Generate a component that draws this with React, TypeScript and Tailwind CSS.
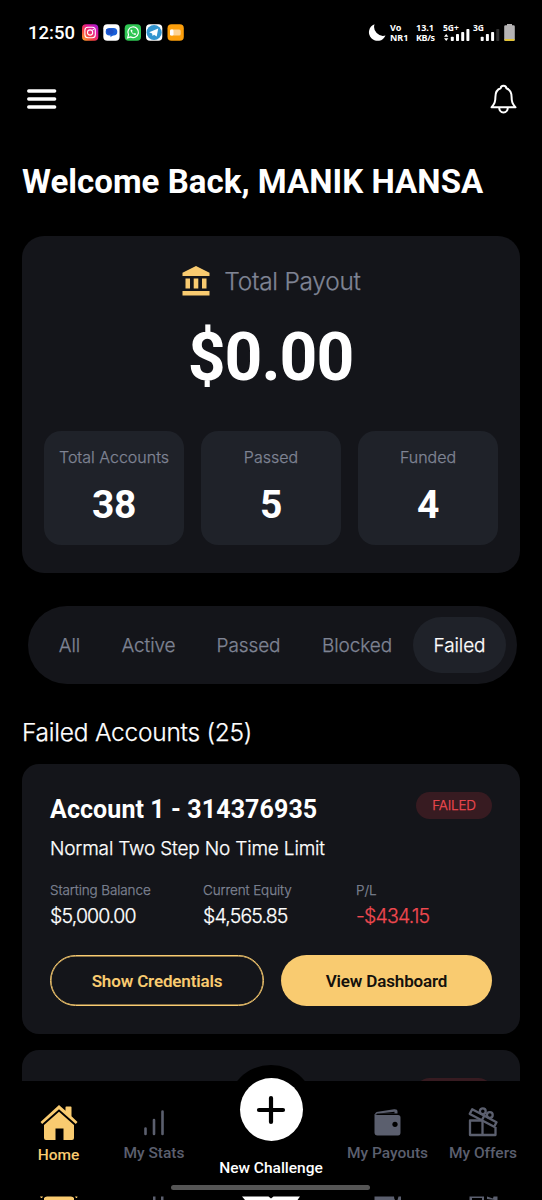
import type { ReactNode } from "react";

const sans = "font-[Inter,'Open_Sans',sans-serif] font-light [-webkit-text-stroke:0.25px_currentColor]";
const roboto = "font-[Roboto,sans-serif]";

function AppIcons() {
  return (
    <svg width="102" height="18" viewBox="82 24 102 18">
      <defs>
        <linearGradient id="ig" x1="0" y1="1" x2="1" y2="0">
          <stop offset="0" stopColor="#fdb32b" />
          <stop offset="0.35" stopColor="#f5413f" />
          <stop offset="0.65" stopColor="#e5189b" />
          <stop offset="1" stopColor="#9a1fd8" />
        </linearGradient>
      </defs>
      <rect x="82" y="24.3" width="16.3" height="16.5" rx="4" fill="url(#ig)" />
      <rect x="84.9" y="27.3" width="10.4" height="10.4" rx="3" fill="none" stroke="#fff" strokeWidth="1.1" />
      <circle cx="90.1" cy="32.5" r="2.6" fill="none" stroke="#fff" strokeWidth="1.1" />
      <circle cx="93.2" cy="29.5" r="0.7" fill="#fff" />
      <rect x="103.3" y="24.3" width="16.3" height="16.5" rx="4" fill="#fff" />
      <path d="M109.500 28h4a3.700 3.700 0 0 1 0 7.600l-1.500.3-1.500 1.300v-1.600h-1a3.800 3.800 0 0 1 0-7.600z" fill="#1a5fd8" />
      <path d="M106 29h6a2.700 2.700 0 0 1 0 5h-3a3.300 3.300 0 0 1-2-3.300z" fill="#1d4fc4" />
      <rect x="124.700" y="24.300" width="16.300" height="16.500" rx="4" fill="#2fc653" />
      <path d="M127.600 37.800l.9-3a5.300 5.300 0 1 1 2.100 2.100z" fill="none" stroke="#fff" strokeWidth="1.200" />
      <path d="M130.700 29.700c-.8 1.500 2.500 5.300 4.400 5.200.7 0 1.300-.7 1-1.200l-1.300-.7-.8.7c-1-.4-1.600-1-2-1.900l.6-.8-.6-1.300z" fill="#fff" />
      <rect x="146" y="24.300" width="16.300" height="16.500" rx="4" fill="#fff" />
      <circle cx="154.100" cy="32.500" r="7.600" fill="#3295cf" />
      <path d="M149.200 32.300l9-3.700-1.500 8-2.700-1.900-1.400 1.300-.5-2.500z" fill="#fff" />
      <rect x="167.500" y="24.300" width="16.300" height="16.500" rx="4" fill="#fb9e0b" />
      <rect x="170" y="29.600" width="10.700" height="5.800" rx="1.500" fill="#fdd394" />
      <rect x="170" y="29.600" width="3.500" height="5.800" rx="1.200" fill="#fff" />
    </svg>
  );
}

function StatusBar() {
  return (
    <div className="flex h-[65px] shrink-0 items-center pl-7 pr-[27px]">
      <span className={`${roboto} w-[54px] text-[18.500px] font-medium leading-[22px] whitespace-nowrap`}>12:50</span>
      <AppIcons />
      <div className="ml-auto flex h-[18px] items-start text-[9px] font-bold leading-[10px] font-['Noto_Sans',sans-serif]">
        <svg width="18" height="18" viewBox="0 0 18 18" className="mr-[4px]">
          <path d="M6.500.2A8.600 8.600 0 1 0 17.500 11.500 9 9 0 0 1 6.500.2z" fill="#fff" />
        </svg>
        <div className="-mt-px w-[26px] whitespace-nowrap">
          <div>Vo</div>
          <div>NR1</div>
        </div>
        <div className="-mt-px w-[27px] whitespace-nowrap">
          <div>13.1</div>
          <div className="tracking-[-0.400px]">KB/s</div>
        </div>
        <div className="relative h-[18px] w-[61px]">
          <div className="flex gap-[14px] text-[8.500px] leading-[8px]">
            <span>5G+</span>
            <span>3G</span>
          </div>
          <svg width="61" height="18" viewBox="443 24 61 18" className="absolute left-0 top-0">
            <path d="M444 36.800l2.200-2.800 2.200 2.800zM444 38.300l2.200 2.800 2.200-2.800z" fill="#fff" />
            <g fill="#fff">
              <rect x="450.800" y="36.700" width="3" height="4.300" rx=".8" />
              <rect x="456" y="34" width="3" height="7" rx=".8" />
              <rect x="461.200" y="32" width="3" height="9" rx=".8" />
              <rect x="466.400" y="29" width="3" height="12" rx=".8" />
              <rect x="480.700" y="36.700" width="3" height="4.300" rx=".8" />
              <rect x="485.900" y="34" width="3" height="7" rx=".8" />
              <rect x="491.100" y="32" width="3" height="9" rx=".8" />
            </g>
            <rect x="496.300" y="29" width="3" height="12" rx=".8" fill="#303030" />
          </svg>
        </div>
        <svg width="11" height="18" viewBox="0 0 11 18">
          <path d="M3 0h5v1.200h1.500q1.300 0 1.300 1.300v13q0 1.500-1.300 1.500h-8q-1.300 0-1.300-1.500v-13q0-1.300 1.300-1.300H3z" fill="#b5b3b4" />
          <path d="M.5 15h10v.7q0 1.300-1 1.300h-8q-1 0-1-1.300z" fill="#e3c436" />
        </svg>
      </div>
    </div>
  );
}

function Bell() {
  return (
    <svg width="27" height="31" viewBox="0 0 27 31" fill="none" stroke="#fff" strokeWidth="2" strokeLinejoin="round">
      <path d="M10.700 4.300C10.700 .9 16.300 .9 16.300 4.300 20.500 5.600 21.600 9 21.600 13c0 5 .8 6.600 3.900 10.300H1.500C4.600 19.600 5.400 18 5.400 13c0-4 1.100-7.400 5.300-8.700z" />
      <path d="M9.200 23.500c0 2.500 1.500 5 4.300 5s4.300-2.500 4.300-5" />
    </svg>
  );
}

function Bank() {
  return (
    <svg width="28" height="30" viewBox="0 0 28 30" fill="#f9cb70">
      <path d="M14 0L27.500 6.800v3.200H.5V6.800zM3.500 12.500H8v10H3.500zM11.700 12.500h4.600v10h-4.600zM20 12.500h4.500v10H20zM.5 25h27v4.500H.5z" />
    </svg>
  );
}

function Stat({ label, value }: { label: string; value: string }) {
  return (
    <div className="flex h-[114px] flex-1 flex-col items-center rounded-[17px] bg-[#1f2229] pt-[15px]">
      <div className={`${sans} text-[16px] leading-[22px] text-[#7f8494] whitespace-nowrap`}>{label}</div>
      <div className={`${roboto} mt-[13px] text-[39px] font-bold leading-[48px] tracking-[-0.500px]`}>{value}</div>
    </div>
  );
}

function Figure({ label, value, tone = "text-white" }: { label: string; value: string; tone?: string }) {
  return (
    <div className="w-[153px] shrink-0 whitespace-nowrap">
      <div className={`${sans} text-[13.500px] leading-[18px] tracking-[-0.100px] text-[#7f8494]`}>{label}</div>
      <div className={`${sans} mt-[3px] text-[19.500px] leading-[28px] tracking-[-0.830px] ${tone}`}>{value}</div>
    </div>
  );
}

function NavItem({ className, label, children }: { className: string; label: string; children: ReactNode }) {
  return (
    <div className={`${roboto} flex flex-col items-center text-[15.500px] font-medium leading-[18px] whitespace-nowrap ${className}`}>
      {children}
      <span>{label}</span>
    </div>
  );
}

function BottomNav() {
  return (
    <div className="absolute inset-x-0 bottom-0 h-[119px] bg-black">
      <div className="absolute left-[227px] top-[-16px] size-[88px] rounded-full bg-black" />
      <div className="relative flex h-full">
        <NavItem className="w-[117px] pt-[24px] text-[#f9cb70]" label="Home">
          <svg width="38" height="36" viewBox="0 0 38 36" className="mb-[5px]" fill="#f9cb70">
            <path d="M19 0L25.500 5.800V2.300q0-.8.8-.8h4.400q.8 0 .8.800v9l6 5.600-1.700 2L19 4.200 2.200 18.900.5 16.900z" />
            <path d="M19 6.700L34 20V33q0 2-2 2h-8.500V23.500h-8V35H6q-2 0-2-2V20z" />
          </svg>
        </NavItem>
        <NavItem className="w-[74px] pt-[28px] text-[#5b5f6e]" label="My Stats">
          <svg width="22" height="27" viewBox="0 0 22 27" className="mb-[8px]" stroke="#5b5f6e" strokeWidth="2.600" strokeLinecap="round">
            <path d="M2.500 19.500v5.500M11 11v14M19.500 2.500V25" />
          </svg>
        </NavItem>
        <NavItem className="w-[160px] text-white" label="New Challenge">
          <div className="mt-[-3px] mb-[18px] flex size-[63px] items-center justify-center rounded-full bg-white">
            <svg width="30" height="30" viewBox="0 0 30 30" stroke="#000" strokeWidth="4.200" strokeLinecap="round">
              <path d="M15 3v24M3 15h24" />
            </svg>
          </div>
        </NavItem>
        <NavItem className="w-[73px] pt-[27px] text-[#5b5f6e]" label="My Payouts">
          <svg width="27" height="28" viewBox="0 0 27 28" className="mb-[8px]" fill="#5b5f6e">
            <path d="M1 6.500Q1 4.300 4 3.800L20 1.200q3.500-.4 3.500 2.300v2H3.500z" />
            <path d="M3.500 7H24q2.500 0 2.500 2.500v15Q26.500 27.500 24 27.500H3.500Q.5 27.500.5 24.500V6z" />
            <path d="M5 5.600L20.500 3.800v1.800z" fill="#000" />
            <circle cx="21" cy="16.300" r="2.600" fill="#000" />
          </svg>
        </NavItem>
        <NavItem className="w-[118px] pt-[26px] text-[#5b5f6e]" label="My Offers">
          <svg width="30" height="30" viewBox="0 0 30 30" className="mb-[7px]" fill="none" stroke="#5b5f6e" strokeWidth="2.300" strokeLinejoin="round">
            <path d="M14.500 13.500H2V28h25.500v-8M14.500 13.500V28" />
            <path d="M4.200 2.300L28.500 15.200l-2.300 4.600L1.800 6.900zM16.200 8.700l-2.400 4.700" />
            <circle cx="14.800" cy="4.200" r="2.900" />
            <circle cx="21.800" cy="8" r="2.900" />
          </svg>
        </NavItem>
      </div>
      <div className="absolute left-[171px] top-[104px] h-[5px] w-[199px] rounded-full bg-[#555]" />
      <svg className="absolute bottom-0 left-0" width="542" height="4" viewBox="0 0 542 4">
        <path d="M40 .5h3l-1 1.500h-1zM44 2q1-1.500 3-1.500h24q2 0 3 1.500V4H44zM75 .5h2.500l-.5 1.500h-1z" fill="#f9cb70" />
        <path d="M242 .5h26.500l2.500 2 2.500-2H300L297.500 4h-52.500z" fill="#fff" />
        <path d="M153 .5h2.500V4H153zM161 .5h2.500V4H161zM374.500.5H394q0 2 1 3.500h-20.500zM398.500.5h2.500V4h-3.500zM469.500.5H482v1.500h-10V4h-2.500zM482 .5h2V4h-2zM487 .5l6 2 .5-2h4V4h-2.500l-8-1z" fill="#5b5f6e" />
      </svg>
    </div>
  );
}

const tabs = ["All", "Active", "Passed", "Blocked"];
const tabWidths = ["w-[63px]", "w-[95px]", "w-[105px]", "w-[112px]"];

export default function App() {
  return (
    <div className="relative flex h-[1200px] w-[542px] flex-col overflow-hidden bg-black text-white">
      <StatusBar />
      <div className="flex h-[68px] shrink-0 items-center justify-between pl-[27px] pr-[25px]">
        <svg width="30" height="20" viewBox="0 0 30 20" stroke="#fff" strokeWidth="3.300" strokeLinecap="round">
          <path d="M1.700 2h26M1.700 10h26M1.700 18h26" />
        </svg>
        <Bell />
      </div>
      <h1 className={`${roboto} mt-[27px] ml-[22px] shrink-0 text-[33px] font-bold leading-[44px] tracking-[0.040px] whitespace-nowrap`}>Welcome Back, MANIK HANSA</h1>

      <section className="mx-[22px] mt-[32px] flex h-[337px] shrink-0 flex-col items-center rounded-[22px] bg-[#14151a] px-[22px] pt-[29px]">
        <div className="flex h-[32px] items-center gap-[14px] pl-px">
          <Bank />
          <span className={`${sans} text-[24.500px] tracking-[-0.270px] text-[#7f8494] whitespace-nowrap`}>Total Payout</span>
        </div>
        <div className={`${roboto} mt-[21px] h-[80px] text-[66px] font-bold leading-[80px] tracking-[-1px]`}><span className="mr-px">$0.00</span></div>
        <div className="mt-[33px] flex w-full gap-[17px]">
          <Stat label="Total Accounts" value="38" />
          <Stat label="Passed" value="5" />
          <Stat label="Funded" value="4" />
        </div>
      </section>

      <nav className={`${sans} mt-[33px] ml-[28px] flex h-[78px] w-[489px] shrink-0 items-center rounded-full bg-[#14151a] pl-[10px] text-[19px] tracking-[-0.100px]`}>
        {tabs.map((t, i) => (
          <span key={t} className={`${tabWidths[i]} pt-[2px] text-center text-[#7f8494]`}>{t}</span>
        ))}
        <span className="flex h-[56px] w-[93px] items-center justify-center rounded-full bg-[#1f2229] pt-[2px]">Failed</span>
      </nav>

      <h2 className={`${sans} mt-[32px] ml-[22px] shrink-0 text-[24.500px] leading-[32px] tracking-[-0.240px]`}>Failed Accounts (25)</h2>

      <section className="mx-[22px] mt-[16px] h-[270px] shrink-0 rounded-[17px] bg-[#14151a] px-[28px] pt-[28px]">
        <div className="flex items-start justify-between">
          <h3 className={`${roboto} text-[25px] font-bold leading-[36px] tracking-[0.090px] whitespace-nowrap`}>Account 1 - 314376935</h3>
          <span className={`${sans} flex h-[27px] w-[76px] items-center justify-center rounded-full bg-[#371b21] text-[13.500px] tracking-[-0.200px] text-[#f04950]`}>FAILED</span>
        </div>
        <p className={`${sans} mt-[7px] text-[19px] leading-[28px] tracking-[-0.170px] whitespace-nowrap`}>Normal Two Step No Time Limit</p>
        <div className="mt-[18px] flex">
          <Figure label="Starting Balance" value="$5,000.00" />
          <Figure label="Current Equity" value="$4,565.85" />
          <Figure label="P/L" value="-$434.15" tone="text-[#f04950]" />
        </div>
        <div className={`${roboto} mt-[25px] flex gap-[17px] text-[17px] font-semibold tracking-[-0.150px]`}>
          <button className="h-[51px] w-[214px] rounded-full border-[1.500px] border-[#f9cb70] pt-[2px] text-[#f9cb70] shadow-[inset_0_0_0_0.500px_#f9cb70]">Show Credentials</button>
          <button className="h-[51px] w-[211px] rounded-full bg-[#f9cb70] pt-[2px] text-[#14110c]">View Dashboard</button>
        </div>
      </section>

      <section className="mx-[22px] mt-[16px] flex h-[270px] shrink-0 justify-end rounded-[17px] bg-[#14151a] px-[28px] pt-[28px]">
        <span className="h-[27px] w-[76px] rounded-full bg-[#371b21]" />
      </section>
      <BottomNav />
    </div>
  );
}
